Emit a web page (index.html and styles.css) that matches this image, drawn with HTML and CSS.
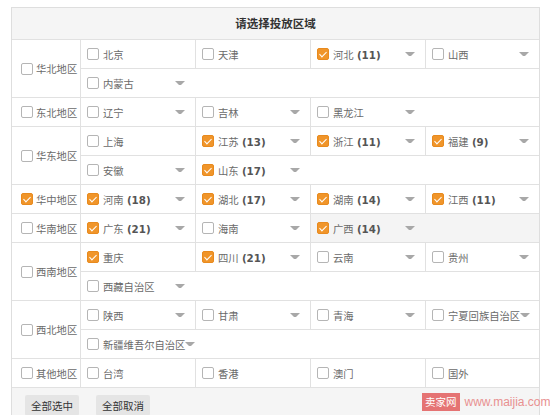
FILE: index.html
```html
<!DOCTYPE html>
<html lang="zh-CN">
<head>
    <meta charset="UTF-8">
    <meta name="viewport" content="width=device-width, initial-scale=1.0">
    <title>投放区域</title>
    <link rel="stylesheet" href="styles.css">
</head>
<body>
    <div class="area-panel">
        <div class="area-head">请选择投放区域</div>

        <!-- 华北 -->
        <div class="region">
            <div class="region-name"><label class="region-check"><span class="box"></span>华北地区</label></div>
            <div class="lines">
                <div class="line">
                    <label class="item"><span class="box"></span><span class="name">北京</span></label>
                    <label class="item"><span class="box"></span><span class="name">天津</span></label>
                    <label class="item checked"><span class="box"></span><span class="name">河北 <b>(11)</b></span><i class="arrow"></i></label>
                    <label class="item"><span class="box"></span><span class="name">山西</span><i class="arrow"></i></label>
                </div>
                <div class="line">
                    <label class="item"><span class="box"></span><span class="name">内蒙古</span><i class="arrow"></i></label>
                </div>
            </div>
        </div>

        <!-- 东北 -->
        <div class="region">
            <div class="region-name"><label class="region-check"><span class="box"></span>东北地区</label></div>
            <div class="lines">
                <div class="line">
                    <label class="item"><span class="box"></span><span class="name">辽宁</span><i class="arrow"></i></label>
                    <label class="item"><span class="box"></span><span class="name">吉林</span><i class="arrow"></i></label>
                    <label class="item"><span class="box"></span><span class="name">黑龙江</span><i class="arrow"></i></label>
                </div>
            </div>
        </div>

        <!-- 华东 -->
        <div class="region">
            <div class="region-name"><label class="region-check"><span class="box"></span>华东地区</label></div>
            <div class="lines">
                <div class="line">
                    <label class="item"><span class="box"></span><span class="name">上海</span></label>
                    <label class="item checked"><span class="box"></span><span class="name">江苏 <b>(13)</b></span><i class="arrow"></i></label>
                    <label class="item checked"><span class="box"></span><span class="name">浙江 <b>(11)</b></span><i class="arrow"></i></label>
                    <label class="item checked"><span class="box"></span><span class="name">福建 <b>(9)</b></span><i class="arrow"></i></label>
                </div>
                <div class="line">
                    <label class="item"><span class="box"></span><span class="name">安徽</span><i class="arrow"></i></label>
                    <label class="item checked"><span class="box"></span><span class="name">山东 <b>(17)</b></span><i class="arrow"></i></label>
                </div>
            </div>
        </div>

        <!-- 华中 -->
        <div class="region">
            <div class="region-name"><label class="region-check checked"><span class="box"></span>华中地区</label></div>
            <div class="lines">
                <div class="line">
                    <label class="item checked"><span class="box"></span><span class="name">河南 <b>(18)</b></span><i class="arrow"></i></label>
                    <label class="item checked"><span class="box"></span><span class="name">湖北 <b>(17)</b></span><i class="arrow"></i></label>
                    <label class="item checked"><span class="box"></span><span class="name">湖南 <b>(14)</b></span><i class="arrow"></i></label>
                    <label class="item checked"><span class="box"></span><span class="name">江西 <b>(11)</b></span><i class="arrow"></i></label>
                </div>
            </div>
        </div>

        <!-- 华南 -->
        <div class="region">
            <div class="region-name"><label class="region-check"><span class="box"></span>华南地区</label></div>
            <div class="lines">
                <div class="line is-hover">
                    <label class="item checked"><span class="box"></span><span class="name">广东 <b>(21)</b></span><i class="arrow"></i></label>
                    <label class="item"><span class="box"></span><span class="name">海南</span><i class="arrow"></i></label>
                    <label class="item checked is-hover"><span class="box"></span><span class="name">广西 <b>(14)</b></span><i class="arrow"></i></label>
                </div>
            </div>
        </div>

        <!-- 西南 -->
        <div class="region">
            <div class="region-name"><label class="region-check"><span class="box"></span>西南地区</label></div>
            <div class="lines">
                <div class="line">
                    <label class="item checked"><span class="box"></span><span class="name">重庆</span></label>
                    <label class="item checked"><span class="box"></span><span class="name">四川 <b>(21)</b></span><i class="arrow"></i></label>
                    <label class="item"><span class="box"></span><span class="name">云南</span><i class="arrow"></i></label>
                    <label class="item"><span class="box"></span><span class="name">贵州</span><i class="arrow"></i></label>
                </div>
                <div class="line">
                    <label class="item"><span class="box"></span><span class="name">西藏自治区</span><i class="arrow"></i></label>
                </div>
            </div>
        </div>

        <!-- 西北 -->
        <div class="region">
            <div class="region-name"><label class="region-check"><span class="box"></span>西北地区</label></div>
            <div class="lines">
                <div class="line">
                    <label class="item"><span class="box"></span><span class="name">陕西</span><i class="arrow"></i></label>
                    <label class="item"><span class="box"></span><span class="name">甘肃</span><i class="arrow"></i></label>
                    <label class="item"><span class="box"></span><span class="name">青海</span><i class="arrow"></i></label>
                    <label class="item"><span class="box"></span><span class="name">宁夏回族自治区</span><i class="arrow"></i></label>
                </div>
                <div class="line">
                    <label class="item"><span class="box"></span><span class="name">新疆维吾尔自治区</span><i class="arrow"></i></label>
                </div>
            </div>
        </div>

        <!-- 其他 -->
        <div class="region">
            <div class="region-name"><label class="region-check"><span class="box"></span>其他地区</label></div>
            <div class="lines">
                <div class="line">
                    <label class="item"><span class="box"></span><span class="name">台湾</span></label>
                    <label class="item"><span class="box"></span><span class="name">香港</span></label>
                    <label class="item"><span class="box"></span><span class="name">澳门</span></label>
                    <label class="item"><span class="box"></span><span class="name">国外</span></label>
                </div>
            </div>
        </div>

        <div class="area-foot">
            <button class="btn">全部选中</button>
            <button class="btn">全部取消</button>
        </div>
    </div>

    <div class="watermark"><span class="wm-logo">卖家网</span><span class="wm-url">www.maijia.com</span></div>
</body>
</html>
```

FILE: styles.css
```css
body {
    margin: 0;
    background: #fff;
    font-family: "DejaVu Sans", "Noto Sans CJK SC", sans-serif;
    font-size: 10.3px;
    color: #6a6a6a;
}

.area-panel {
    box-sizing: border-box;
    width: 529px;
    margin: 7px 0 0 11px;
    border: 1px solid #dedede;
    border-bottom: none;
}

.area-head {
    height: 31px;
    line-height: 31px;
    text-align: center;
    background: #f5f5f5;
    border-bottom: 1px solid #e1e1e1;
    font-family: "Noto Sans CJK SC", sans-serif;
    font-size: 11.5px;
    font-weight: bold;
    color: #333;
}

.region {
    display: flex;
    border-bottom: 1px solid #e1e1e1;
}

.region-name {
    box-sizing: border-box;
    width: 70px;
    border-right: 1px solid #e1e1e1;
    display: flex;
    align-items: center;
    padding-left: 9px;
}

.region-check {
    display: flex;
    align-items: center;
    white-space: nowrap;
}

.region-check .box {
    margin-right: 3px;
}

.lines {
    flex: 1;
}

.line {
    display: grid;
    grid-template-columns: 114px 115px 115px 114px;
    height: 28px;
}

.line + .line {
    border-top: 1px solid #e1e1e1;
}

.line.is-hover {
    background: #f4f4f4;
}

.item {
    box-sizing: border-box;
    display: flex;
    align-items: center;
    padding-left: 6px;
    background: #fff;
    white-space: nowrap;
    cursor: pointer;
}

.item + .item {
    border-left: 1px solid #e1e1e1;
}

.item.is-hover {
    background: transparent;
}

.item .name {
    margin-left: 4px;
}

.item .name b {
    color: #555;
}

.box {
    box-sizing: border-box;
    width: 12px;
    height: 12px;
    flex: none;
    border: 1px solid #b5b5b5;
    border-radius: 2px;
    background: #fff;
    position: relative;
}

.checked > .box {
    background: #f0952a;
    border-color: #e88a1e;
}

.checked > .box::after {
    content: "";
    position: absolute;
    left: 3px;
    top: 1px;
    width: 3px;
    height: 6px;
    border: solid #fff;
    border-width: 0 1px 1px 0;
    transform: rotate(45deg);
}

/* small dropdown triangle next to a province */
.arrow {
    flex: none;
    margin-left: auto;
    margin-right: 10px;
    padding-left: 2px;
    width: 0;
    height: 0;
    border-left: 4px solid transparent;
    border-right: 4px solid transparent;
    border-top: 4px solid #a8a8a8;
    background-clip: content-box;
}

.area-foot {
    height: 40px;
    background: #f5f5f5;
    padding: 7px 0 0 13px;
    box-sizing: border-box;
    display: flex;
    align-items: flex-start;
    gap: 17px;
}

.btn {
    height: 21px;
    padding: 0 6px;
    border: none;
    border-radius: 2px;
    background: #e5e5e5;
    color: #333;
    font-family: "Noto Sans CJK SC", sans-serif;
    font-size: 10.5px;
    cursor: pointer;
}

.watermark {
    position: absolute;
    left: 422px;
    top: 393px;
    display: flex;
    align-items: center;
    gap: 5px;
    white-space: nowrap;
}

.wm-logo {
    background: rgba(226, 92, 92, 0.85);
    color: #fff;
    font-family: "Noto Sans CJK SC", sans-serif;
    font-size: 10.5px;
    padding: 0 3px;
    height: 18px;
    line-height: 18px;
}

.wm-url {
    color: #e89090;
    font-family: "Liberation Sans", sans-serif;
    font-size: 12px;
}
```
